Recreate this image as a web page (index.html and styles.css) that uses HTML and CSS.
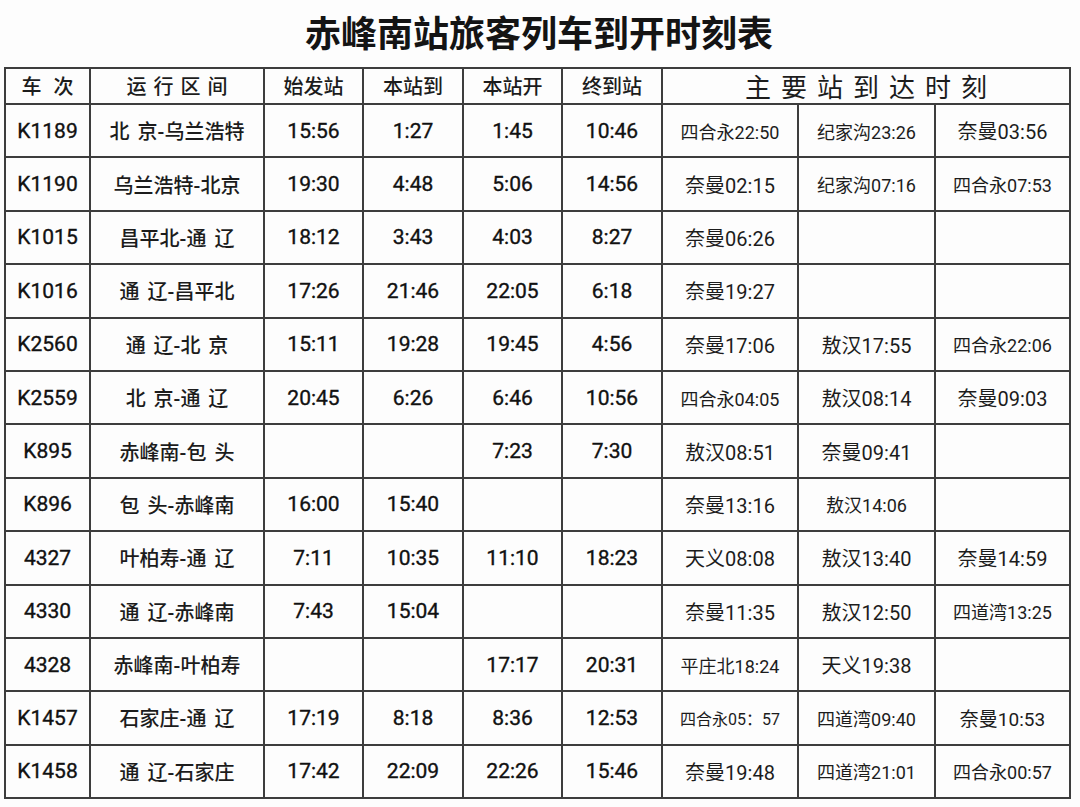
FILE: index.html
```html
<!DOCTYPE html>
<html lang="zh-CN">
<head>
<meta charset="utf-8">
<title>赤峰南站旅客列车到开时刻表</title>
<link rel="stylesheet" href="styles.css">
</head>
<body>
<div class="page">
  <h1 class="title">赤峰南站旅客列车到开时刻表</h1>
  <table class="timetable">
    <colgroup>
      <col class="c-no"><col class="c-route"><col class="c-t"><col class="c-t2"><col class="c-t"><col class="c-t2"><col class="c-s1"><col class="c-s2"><col class="c-s3">
    </colgroup>
    <thead>
      <tr>
        <th class="h-no">车次</th>
        <th class="h-route">运行区间</th>
        <th>始发站</th>
        <th>本站到</th>
        <th>本站开</th>
        <th>终到站</th>
        <th colspan="3" class="h-main">主要站到达时刻</th>
      </tr>
    </thead>
    <tbody>
      <tr><td class="no">K1189</td><td class="route">北 京-乌兰浩特</td><td class="t">15:56</td><td class="t">1:27</td><td class="t">1:45</td><td class="t">10:46</td><td class="st s3">四合永22:50</td><td class="st s3">纪家沟23:26</td><td class="st s2">奈曼03:56</td></tr>
      <tr><td class="no">K1190</td><td class="route">乌兰浩特-北京</td><td class="t">19:30</td><td class="t">4:48</td><td class="t">5:06</td><td class="t">14:56</td><td class="st s2">奈曼02:15</td><td class="st s3">纪家沟07:16</td><td class="st s3">四合永07:53</td></tr>
      <tr><td class="no">K1015</td><td class="route">昌平北-通 辽</td><td class="t">18:12</td><td class="t">3:43</td><td class="t">4:03</td><td class="t">8:27</td><td class="st s2">奈曼06:26</td><td class="st"></td><td class="st"></td></tr>
      <tr><td class="no">K1016</td><td class="route">通 辽-昌平北</td><td class="t">17:26</td><td class="t">21:46</td><td class="t">22:05</td><td class="t">6:18</td><td class="st s2">奈曼19:27</td><td class="st"></td><td class="st"></td></tr>
      <tr><td class="no">K2560</td><td class="route">通 辽-北 京</td><td class="t">15:11</td><td class="t">19:28</td><td class="t">19:45</td><td class="t">4:56</td><td class="st s2">奈曼17:06</td><td class="st s2">敖汉17:55</td><td class="st s3">四合永22:06</td></tr>
      <tr><td class="no">K2559</td><td class="route">北 京-通 辽</td><td class="t">20:45</td><td class="t">6:26</td><td class="t">6:46</td><td class="t">10:56</td><td class="st s3">四合永04:05</td><td class="st s2">敖汉08:14</td><td class="st s2">奈曼09:03</td></tr>
      <tr><td class="no">K895</td><td class="route">赤峰南-包 头</td><td class="t"></td><td class="t"></td><td class="t">7:23</td><td class="t">7:30</td><td class="st s2">敖汉08:51</td><td class="st s2">奈曼09:41</td><td class="st"></td></tr>
      <tr><td class="no">K896</td><td class="route">包 头-赤峰南</td><td class="t">16:00</td><td class="t">15:40</td><td class="t"></td><td class="t"></td><td class="st s2">奈曼13:16</td><td class="st s3">敖汉14:06</td><td class="st"></td></tr>
      <tr><td class="no">4327</td><td class="route">叶柏寿-通 辽</td><td class="t">7:11</td><td class="t">10:35</td><td class="t">11:10</td><td class="t">18:23</td><td class="st s2">天义08:08</td><td class="st s2">敖汉13:40</td><td class="st s2">奈曼14:59</td></tr>
      <tr><td class="no">4330</td><td class="route">通 辽-赤峰南</td><td class="t">7:43</td><td class="t">15:04</td><td class="t"></td><td class="t"></td><td class="st s2">奈曼11:35</td><td class="st s2">敖汉12:50</td><td class="st s3">四道湾13:25</td></tr>
      <tr><td class="no">4328</td><td class="route">赤峰南-叶柏寿</td><td class="t"></td><td class="t"></td><td class="t">17:17</td><td class="t">20:31</td><td class="st s3">平庄北18:24</td><td class="st s2">天义19:38</td><td class="st"></td></tr>
      <tr><td class="no">K1457</td><td class="route">石家庄-通 辽</td><td class="t">17:19</td><td class="t">8:18</td><td class="t">8:36</td><td class="t">12:53</td><td class="st s4">四合永05：57</td><td class="st s3">四道湾09:40</td><td class="st s19">奈曼10:53</td></tr>
      <tr><td class="no">K1458</td><td class="route">通 辽-石家庄</td><td class="t">17:42</td><td class="t">22:09</td><td class="t">22:26</td><td class="t">15:46</td><td class="st s2">奈曼19:48</td><td class="st s3">四道湾21:01</td><td class="st s3">四合永00:57</td></tr>
    </tbody>
  </table>
</div>
</body>
</html>
```

FILE: styles.css
```css
html, body {
  margin: 0;
  padding: 0;
  background: #fdfdfd;
}

body {
  font-family: Roboto, "Noto Sans CJK SC", sans-serif;
  color: #1c1c1c;
}

.page {
  width: 1080px;
  height: 807px;
  overflow: hidden;
  padding-left: 4px;
  box-sizing: border-box;
}

.title {
  margin: 0;
  height: 67px;
  line-height: 62px;
  font-family: "Noto Sans CJK SC", sans-serif;
  font-size: 36px;
  font-weight: 700;
  text-align: center;
  color: #141414;
  padding-right: 6px;
}

.timetable {
  border-collapse: collapse;
  table-layout: fixed;
  width: 1066px;
}

.c-no { width: 85px; }
.c-route { width: 174px; }
.c-t { width: 99px; }
.c-t2 { width: 100px; }
.c-s1 { width: 136px; }
.c-s2 { width: 137px; }
.c-s3 { width: 135px; }

.timetable th,
.timetable td {
  border: 2px solid #3d3d3d;
  padding: 0;
  text-align: center;
  vertical-align: middle;
  white-space: nowrap;
  overflow: hidden;
}

.timetable thead tr {
  height: 36px;
}

.timetable th {
  font-family: "Noto Sans CJK SC", sans-serif;
  font-size: 20px;
  font-weight: 500;
  line-height: 1;
}

.h-no {
  letter-spacing: 12px;
  text-indent: 12px;
}

.h-route {
  letter-spacing: 7px;
  text-indent: 7px;
}

.h-main {
  font-size: 26px !important;
  font-weight: 400 !important;
  letter-spacing: 10px;
  text-indent: 10px;
}

.timetable tbody tr {
  height: 53.4px;
}

.no,
.t {
  font-size: 21px;
  font-weight: 400;
  color: #111;
  -webkit-text-stroke: 0.35px #111;
}

.route {
  font-size: 20px;
  font-weight: 500;
  word-spacing: 3px;
}

.st {
  font-weight: 400;
}

.s2 { font-size: 20px; }
.s19 { font-size: 19px; }
.s3 { font-size: 18px; }
.s4 { font-size: 16px; }
```
